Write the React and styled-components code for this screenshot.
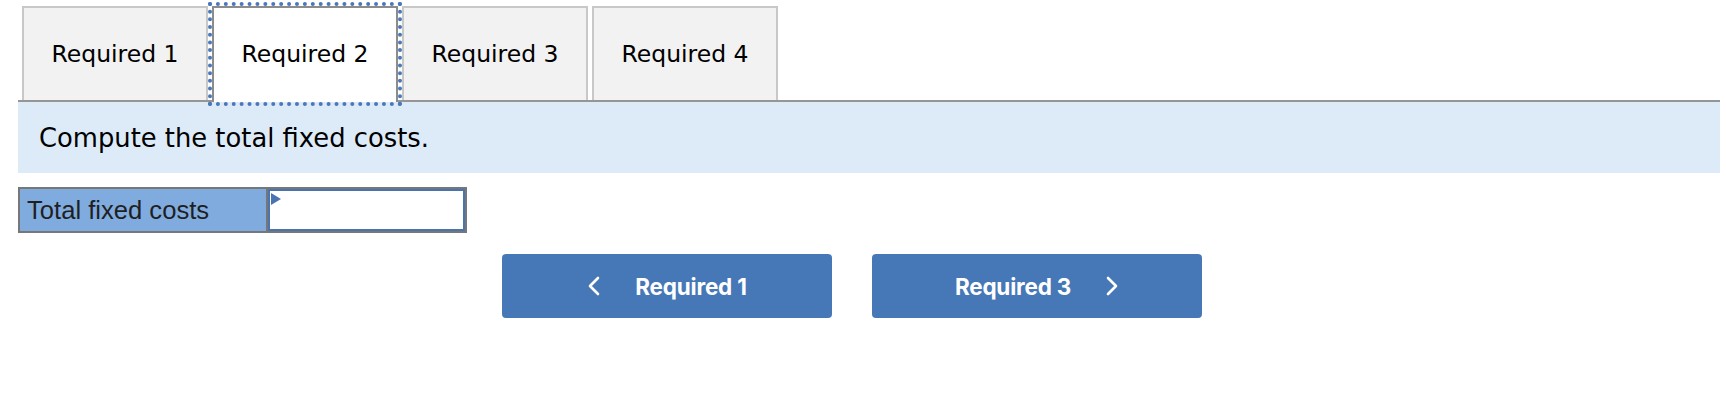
import styled, { createGlobalStyle } from "styled-components";

const GlobalStyle = createGlobalStyle`
  html, body {
    margin: 0;
    padding: 0;
    background: #ffffff;
  }
  * {
    box-sizing: border-box;
  }
`;

const Page = styled.div`
  padding: 0 6px 0 18px;
  width: 1726px;
  height: 402px;
`;

const TabBar = styled.div`
  display: flex;
  gap: 4px;
  padding: 6px 0 0 4px;
  border-bottom: 2px solid #969696;
  height: 102px;
`;

const Tab = styled.div`
  display: flex;
  align-items: center;
  justify-content: center;
  width: 186px;
  height: ${(props) => (props.active ? "96px" : "94px")};
  padding-bottom: ${(props) => (props.active ? "2px" : "0")};
  background: ${(props) => (props.active ? "#ffffff" : "#f2f2f2")};
  border: 2px solid ${(props) => (props.active ? "#8c8c8c" : "#c8c8c8")};
  border-bottom: none;
  outline: ${(props) => (props.active ? "4px dotted #4a78b8" : "none")};
  font-family: "DejaVu Sans", Verdana, sans-serif;
  font-size: 23.5px;
  color: #000;
`;

const Prompt = styled.div`
  display: flex;
  align-items: center;
  height: 71px;
  padding-left: 21px;
  background: #ddebf8;
  font-family: "DejaVu Sans", Verdana, sans-serif;
  font-size: 25.8px;
  color: #000;
`;

const AnswerRow = styled.div`
  display: flex;
  width: 449px;
  height: 46px;
  margin-top: 14px;
  border: 2px solid #777777;
`;

const Label = styled.div`
  display: flex;
  align-items: center;
  width: 248px;
  padding-left: 7px;
  background: #80abdf;
  border-right: 2px solid #777777;
  font-family: "Liberation Sans", Arial, sans-serif;
  font-size: 25.6px;
  color: #1f1f1f;
`;

const InputCell = styled.div`
  position: relative;
  flex: 1;
  background: #ffffff;
  border: 2px solid #4a74b0;

  &::before {
    content: "";
    position: absolute;
    top: 2px;
    left: 1px;
    border-top: 6px solid transparent;
    border-bottom: 6px solid transparent;
    border-left: 10px solid #4a74b0;
  }
`;

const NavRow = styled.div`
  display: flex;
  justify-content: center;
  gap: 40px;
  margin-top: 21px;
  padding-right: 34px;
`;

const NavButton = styled.button`
  display: flex;
  align-items: center;
  justify-content: center;
  gap: 34px;
  width: 330px;
  height: 64px;
  border: none;
  border-radius: 4px;
  background: #4677b7;
  color: #ffffff;
  font-family: Inter, Roboto, "Liberation Sans", sans-serif;
  font-weight: 700;
  font-size: 22.5px;
  letter-spacing: -0.2px;
  padding: 0;
  cursor: pointer;

  svg {
    flex: none;
  }
`;

const Chevron = ({ dir }) => (
  <svg width="14" height="20" viewBox="0 0 14 20">
    <path
      d={dir === "left" ? "M11 2 L3 10 L11 18" : "M3 2 L11 10 L3 18"}
      fill="none"
      stroke="#ffffff"
      strokeWidth="2.6"
      strokeLinecap="round"
      strokeLinejoin="round"
    />
  </svg>
);

const tabs = ["Required 1", "Required 2", "Required 3", "Required 4"];

export default function App() {
  return (
    <Page>
      <GlobalStyle />
      <TabBar>
        {tabs.map((t, i) => (
          <Tab key={t} active={i === 1}>
            {t}
          </Tab>
        ))}
      </TabBar>
      <Prompt>Compute the total fixed costs.</Prompt>
      <AnswerRow>
        <Label>Total fixed costs</Label>
        <InputCell />
      </AnswerRow>
      <NavRow>
        <NavButton>
          <Chevron dir="left" />
          Required 1
        </NavButton>
        <NavButton>
          Required 3
          <Chevron dir="right" />
        </NavButton>
      </NavRow>
    </Page>
  );
}
